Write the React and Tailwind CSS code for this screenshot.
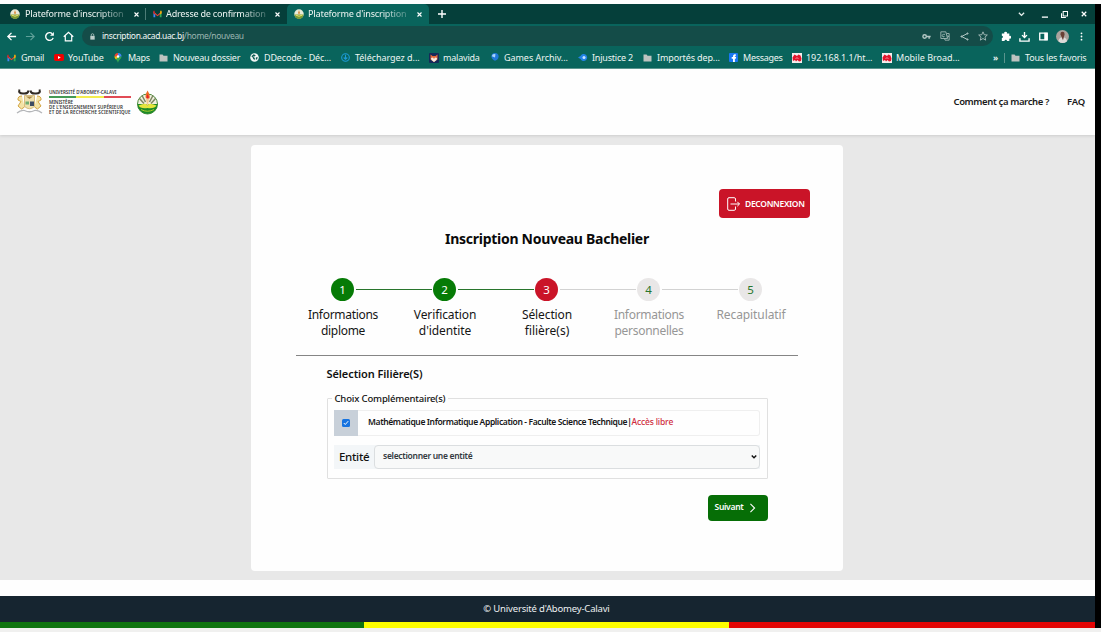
import { Fragment } from 'react';

const base = 'whitespace-nowrap';

function Seal() {
  return (
    <svg viewBox="0 0 20 20" className="size-[10px] shrink-0">
      <circle cx="10" cy="10" r="9.5" fill="#e8ead8" />
      <path d="M1 11h18a9 9 0 0 1-18 0z" fill="#7a9a35" />
      <path d="M10 2l2 6-2 3-2-3z" fill="#d98b3a" />
      <path d="M3 12q7 5 14 0" stroke="#e9e36a" strokeWidth="2" fill="none" />
    </svg>
  );
}

function GmailMark() {
  return (
    <svg viewBox="0 0 20 16" className="w-[9px] h-[8px] shrink-0">
      <path d="M1 2v13h4V7z" fill="#4285f4" />
      <path d="M19 2v13h-4V7z" fill="#34a853" />
      <path d="M1 2l9 8 9-8v4l-9 7-9-7z" fill="#ea4335" />
      <path d="M1 1h3v8L1 7z" fill="#c5221f" />
      <path d="M19 1h-3v8l3-2z" fill="#fbbc04" />
    </svg>
  );
}

function Folder() {
  return (
    <svg viewBox="0 0 20 18" className="w-[9px] h-[8px] shrink-0">
      <path d="M1 1h7l2 3h9v13H1z" fill="#bdc3c0" />
    </svg>
  );
}

function YouTubeMark() {
  return (
    <svg viewBox="0 0 20 14" className="w-[10px] h-[7px] shrink-0">
      <rect width="20" height="14" rx="3.5" fill="#f00000" />
      <path d="M8 4l5.500 3L8 10z" fill="#fff" />
    </svg>
  );
}

function MapsPin() {
  return (
    <svg viewBox="0 0 14 20" className="w-[8px] h-[10px] shrink-0">
      <path d="M7 20C6 14 0 12 0 7h14c0 5-6 7-7 13z" fill="#34a853" />
      <path d="M0 7a7 7 0 0 1 7-7v7z" fill="#ea4335" />
      <path d="M7 0a7 7 0 0 1 7 7H7z" fill="#4285f4" />
      <path d="M0 7h7l-4 6C1 11 0 9 0 7z" fill="#fbbc04" />
      <circle cx="7" cy="7" r="2.500" fill="#fff" />
    </svg>
  );
}

function Globe() {
  return (
    <svg viewBox="0 0 20 20" className="size-[9px] shrink-0">
      <circle cx="10" cy="10" r="9.500" fill="#f1f5f4" />
      <path d="M3 7l5-4 5 2-3 3-4 0 5 3-1 5-3-3-1-3zM13 10l4-1-1 5-3 1z" fill="#0b5b53" />
    </svg>
  );
}

function DownloadDisc() {
  return (
    <svg viewBox="0 0 20 20" className="size-[9px] shrink-0" fill="none" stroke="#1d9bd8" strokeWidth="2.400">
      <circle cx="10" cy="10" r="8.500" />
      <path d="M10 4v10M6 10l4 4 4-4" />
    </svg>
  );
}

function Fox() {
  return (
    <svg viewBox="0 0 20 20" className="size-[10px] shrink-0">
      <rect width="20" height="20" rx="2" fill="#15295a" />
      <path d="M3 3l4 3h6l4-3v10l-7 5-7-5z" fill="#e2683a" />
      <path d="M4 10l4-1 2 3 2-3 4 1-1 4-5 4-5-4z" fill="#f5ece4" />
    </svg>
  );
}

function BlueBall() {
  return (
    <svg viewBox="0 0 20 20" className="w-[10px] h-[9px] shrink-0">
      <path d="M2 8a8 8 0 0 1 16 0c0 6-5 9-8 9S2 13 2 8z" fill="#2179d8" />
      <path d="M3 7a6 6 0 0 1 8-4l-1 7z" fill="#a9d3fb" />
    </svg>
  );
}

function BlueEye() {
  return (
    <svg viewBox="0 0 20 18" className="w-[10px] h-[9px] shrink-0">
      <path d="M0 9l5-3a7 7 0 1 1 0 6z" fill="#2383e6" />
      <circle cx="12" cy="9" r="3" fill="#c7e5ff" />
    </svg>
  );
}

function FacebookMark() {
  return (
    <svg viewBox="0 0 20 20" className="size-[9px] shrink-0">
      <rect width="20" height="20" rx="2" fill="#1877f2" />
      <path d="M9 20v-7H6V9h3V7c0-3 2-4 6-4v4c-2 0-2 0-2 2h3l-1 4h-2v7z" fill="#fff" />
    </svg>
  );
}

function RedPetals() {
  return (
    <svg viewBox="0 0 20 20" className="size-[10px] shrink-0">
      <rect width="20" height="20" fill="#f5eeee" />
      <path d="M1 9l4-6 5 3 3-3 4 2 2 6-1 5-4 1-3-3-3 3-2-3-4 2z" fill="#e3142a" />
      <path d="M7 12l3-3 3 3" stroke="#fff" strokeWidth="1" fill="none" />
    </svg>
  );
}

const bookmarks = [
  { icon: <GmailMark />, text: 'Gmail', w: 'w-[47px]', t: 'tracking-[-0.33px]' },
  { icon: <YouTubeMark />, text: 'YouTube', w: 'w-[60px]', t: 'tracking-[-0.1px]' },
  { icon: <MapsPin />, text: 'Maps', w: 'w-[45px]', t: 'tracking-[-0.3px]' },
  { icon: <Folder />, text: 'Nouveau dossier', w: 'w-[91px]', t: 'tracking-[-0.27px]' },
  { icon: <Globe />, text: 'DDecode - Déc...', w: 'w-[91px]', t: 'tracking-[-0.15px]' },
  { icon: <DownloadDisc />, text: 'Téléchargez d...', w: 'w-[88px]', t: 'tracking-[-0.04px]' },
  { icon: <Fox />, text: 'malavida', w: 'w-[61px]', t: 'tracking-[-0.2px]' },
  { icon: <BlueBall />, text: 'Games Archiv...', w: 'w-[88px]', t: 'tracking-[-0.05px]' },
  { icon: <BlueEye />, text: 'Injustice 2', w: 'w-[65px]', t: 'tracking-[-0.2px]' },
  { icon: <Folder />, text: 'Importés dep...', w: 'w-[86px]', t: 'tracking-[-0.12px]' },
  { icon: <FacebookMark />, text: 'Messages', w: 'w-[63px]', t: 'tracking-[-0.28px]' },
  { icon: <RedPetals />, text: '192.168.1.1/ht...', w: 'w-[90px]', t: 'tracking-[-0.08px]' },
  { icon: <RedPetals />, text: 'Mobile Broad...', w: 'w-[111px]', t: 'tracking-[-0.01px]' },
];

function Cross() {
  return (
    <svg viewBox="0 0 10 10" className="size-[5px] shrink-0" stroke="#fff" strokeWidth="2.200">
      <path d="M1 1l8 8M9 1l-8 8" />
    </svg>
  );
}

const fade = 'bg-clip-text text-transparent bg-linear-to-r from-[#e9f1ef] from-75% to-[#e9f1ef40]';

function TabBar() {
  return (
    <div className="flex h-5 bg-[#053f3a] text-[9px] leading-[20px]">
      <div className="flex w-[146px] items-center pl-[10px]">
        <Seal />
        <span className={`${base} ${fade} ml-[5px] w-[99px] tracking-[-0.22px] font-medium`}>Plateforme d'inscription</span>
        <span className="ml-[10px] flex"><Cross /></span>
      </div>
      <div className="my-[4px] -ml-px w-px bg-[#4c7c77]" />
      <div className="flex w-[141px] items-center pl-[7px]">
        <GmailMark />
        <span className={`${base} ${fade} ml-[4px] w-[100px] tracking-[-0.25px] font-medium`}>Adresse de confirmation</span>
        <span className="ml-[9px] flex"><Cross /></span>
      </div>
      <div className="flex w-[142px] items-center rounded-t-[5px] bg-[#09645c] pl-[7px]">
        <Seal />
        <span className={`${base} ${fade} ml-[4px] w-[99px] tracking-[-0.22px] font-medium`}>Plateforme d'inscription</span>
        <span className="ml-[10px] flex"><Cross /></span>
      </div>
      <div className="flex items-center pl-[9px]">
        <svg viewBox="0 0 8 8" className="size-[8px]" stroke="#fff" strokeWidth="1.400"><path d="M4 0v8M0 4h8" /></svg>
      </div>
      <div className="ml-auto flex items-center gap-[13px] pr-[8px]">
        <svg viewBox="0 0 8 8" className="size-[7px] mr-[3px]" fill="none" stroke="#e8f0ee" strokeWidth="1.500"><path d="M1 2l3 3 3-3" /></svg>
        <svg viewBox="0 0 8 8" className="size-[7px]" stroke="#fff" strokeWidth="1.500"><path d="M1 7h7" /></svg>
        <svg viewBox="0 0 8 8" className="size-[7px]" fill="none" stroke="#fff" strokeWidth="1.200"><path d="M2.500.600h5v5h-5zM.600 2.500v5h5" /></svg>
        <svg viewBox="0 0 8 8" className="size-[6px]" stroke="#fff" strokeWidth="1.600"><path d="M1 1l6 6M7 1L1 7" /></svg>
      </div>
    </div>
  );
}

const ic = 'size-[11px] shrink-0';

function Toolbar() {
  return (
    <div className="flex h-[23px] items-center bg-[#09645c] pt-[1px] pl-[6px]">
      <div className="flex w-[76px] items-center gap-[8px]">
        <svg viewBox="0 0 12 12" className={ic} fill="none" stroke="#fff" strokeWidth="1.400"><path d="M11 6H2M6 2L2 6l4 4" /></svg>
        <svg viewBox="0 0 12 12" className={ic} fill="none" stroke="#5fa099" strokeWidth="1.300"><path d="M1 6h9M6 2l4 4-4 4" /></svg>
        <svg viewBox="0 0 12 12" className={ic} fill="none" stroke="#fff" strokeWidth="1.500"><path d="M10 7.500A4.200 4.200 0 1 1 9 3" /><path d="M10.800 1v4.200H6.600z" fill="#fff" stroke="none" /></svg>
        <svg viewBox="0 0 12 12" className={ic} fill="none" stroke="#fff" strokeWidth="1.300"><path d="M.800 6.300L6 1.500l5.200 4.800M2.500 5.200v5.600h7V5.200" /></svg>
      </div>
      <div className="flex h-[20px] w-[911px] items-center rounded-full bg-[#144c48] pr-[5px] pl-[8px]">
        <svg viewBox="0 0 8 10" className="w-[5px] h-[7px]"><rect x=".5" y="4" width="7" height="6" fill="#bdccc9" /><path d="M2 4V2.500a2 2 0 0 1 4 0V4" fill="none" stroke="#bdccc9" strokeWidth="1.200" /></svg>
        <span className={`${base} ml-[7px] text-[8.5px] tracking-[-0.33px] text-[#9ab5b1]`}>
          <span className="text-[#f2f7f6]">inscription.acad.uac.bj</span>/home/nouveau
        </span>
        <div className="ml-auto flex items-center gap-[9.500px]">
          <svg viewBox="0 0 12 12" className="size-[9px]" fill="none" stroke="#b4c8c5" strokeWidth="1.900"><circle cx="3.500" cy="6" r="2.300" /><path d="M6 6h5.500M9.500 6v3" /></svg>
          <svg viewBox="0 0 12 12" className="size-[10px]" fill="none" stroke="#a9bfbc" strokeWidth="1"><path d="M1 1h6l2 8H1zM8 3h3v8H6l-.5-2" /><path d="M6 4H4.200a1.500 1.500 0 1 0 1 2.500H4M8.500 6h2M9 8l1.500-2" /></svg>
          <svg viewBox="0 0 12 12" className="size-[9px]" fill="none" stroke="#b4c8c5" strokeWidth="1.300"><path d="M10 2L2 6l8 4" /><circle cx="10" cy="2" r=".8" /><circle cx="2" cy="6" r=".8" /><circle cx="10" cy="10" r=".8" /></svg>
          <svg viewBox="0 0 12 12" className="size-[10px]" fill="none" stroke="#b4c8c5" strokeWidth="1"><path d="M6 1l1.500 3.500 3.700.3-2.800 2.500.8 3.700L6 9l-3.200 2 .8-3.700L.800 4.800l3.700-.3z" /></svg>
        </div>
      </div>
      <div className="flex items-center pl-[8px]">
        <svg viewBox="0 0 12 12" className="size-[10px]"><path d="M1 3h3a1.600 1.600 0 1 1 3 0h3v3a1.600 1.600 0 1 1 0 3v3H7.200a1.500 1.500 0 0 0-3 0H1V8.500a1.300 1.300 0 0 0 0-2.700z" fill="#fff" /></svg>
        <svg viewBox="0 0 12 12" className="ml-[8px] size-[11px]" fill="none" stroke="#fff" strokeWidth="1.500"><path d="M6 1v6M3.300 4.500L6 7.200l2.700-2.700M1 8v3h10V8" /></svg>
        <svg viewBox="0 0 12 12" className="ml-[9px] size-[9px]"><path d="M1 1.500h10v9H1z" fill="none" stroke="#fff" strokeWidth="1.800" /><path d="M7 1h4v10H7z" fill="#fff" /></svg>
        <svg viewBox="0 0 14 14" className="ml-[8px] size-[13px]"><circle cx="7" cy="7" r="7" fill="#aaa39d" /><path d="M2.500 12Q3.500 8 7 7.500q4 .5 5 4.500-5 4-9.500 0z" fill="#dedbd9" /><path d="M4.700 4.500a2.300 2.500 0 0 1 4.600 0L8.500 7.500 7.500 11 6 7.500z" fill="#6a4035" /></svg>
        <svg viewBox="0 0 4 12" className="ml-[11px] h-[9px] w-[3px]" fill="#fff"><circle cx="2" cy="1.800" r="1.200" /><circle cx="2" cy="6" r="1.200" /><circle cx="2" cy="10.200" r="1.200" /></svg>
      </div>
    </div>
  );
}

function BookmarkBar() {
  return (
    <div className="flex h-[22px] items-center border-b border-[#5d9992] bg-[#09645c] pl-[7px] text-[9px] text-[#edf5f3]">
      {bookmarks.map((b) => (
        <div key={b.text} className={`${b.w} flex shrink-0 items-center`}>
          <span className="flex w-[14px] shrink-0 items-center">{b.icon}</span>
          <span className={`${base} ${b.t}`}>{b.text}</span>
        </div>
      ))}
      <span className="w-[11px] shrink-0 leading-none font-semibold">»</span>
      <span className="mr-[6px] h-[10px] w-px shrink-0 bg-[#5a948d]" />
      <span className="flex w-[14px] shrink-0 items-center"><Folder /></span>
      <span className={`${base} tracking-[-0.2px]`}>Tous les favoris</span>
    </div>
  );
}

function Crest() {
  return (
    <svg viewBox="0 0 54 52" className="h-[26px] w-[27px] shrink-0">
      <path d="M7 1Q4 9 14 9q10 1 11-6M47 1q3 8-7 8-10 1-11-6" fill="none" stroke="#302a24" strokeWidth="4" />
      <path d="M12 14q-9 0-8 8l6 3-6 9 7 6 6-4M42 14q9 0 8 8l-6 3 6 9-7 6-6-4" fill="#f4e3a6" stroke="#d3a544" strokeWidth="2" />
      <path d="M17 13h20v22q-10 9-20 0z" fill="#eee0ae" stroke="#c59c48" strokeWidth="1.200" />
      <path d="M20 15h14l-7 5z" fill="#a98745" />
      <path d="M19 25h7v6h-7z" fill="#6fae72" />
      <path d="M28 25h8v9h-8z" fill="#3e4c63" />
      <path d="M2 48q8-7 15-5 10 5 20 0 7-2 15 5" fill="none" stroke="#b4b6b9" strokeWidth="2.500" />
    </svg>
  );
}

function UniversitySeal() {
  return (
    <svg viewBox="0 0 42 50" className="h-[25px] w-[21px] shrink-0">
      <circle cx="21" cy="28" r="20" fill="#f1f0df" stroke="#4a8a39" strokeWidth="2" />
      <path d="M1 28h40a20 20 0 0 1-40 0z" fill="#1d8a28" />
      <path d="M5 17l9 10M37 17l-9 10M10 11l7 13M32 11l-7 13" stroke="#7d8560" strokeWidth="3" />
      <path d="M3 31q18-7 18 1 0-8 18-1-4 7-18 5-14 2-18-5z" fill="#e4e53d" />
      <path d="M8 39q13 7 26 0" fill="none" stroke="#a9cf2b" strokeWidth="2" />
      <path d="M21 1q-6 11-3 16h7q2-6-4-16z" fill="#ef6a22" />
      <path d="M21 8q-3 7-1 10h3q1-5-2-10z" fill="#e3202b" />
      <path d="M18 17h6l-2 14h-2z" fill="#f4c98e" />
    </svg>
  );
}

function SiteHeader() {
  return (
    <header className="z-10 flex h-[66px] shrink-0 items-center bg-[#fefefe] pr-[10px] pl-[16px] shadow-[0_1px_3px_rgba(0,0,0,0.12)]">
      <Crest />
      <div className="ml-[6px] flex w-[82px] flex-col text-[4.5px] leading-[5px] font-semibold text-[#333]">
        <span className={base}>UNIVERSITÉ D'ABOMEY-CALAVI</span>
        <span className="mt-px mb-[2px] flex h-[2px]">
          <span className="flex-1 bg-[#459a55]" />
          <span className="flex-1 bg-[#f4ed4e]" />
          <span className="flex-1 bg-[#e14b55]" />
        </span>
        <span className={base}>MINISTÈRE</span>
        <span className={`${base} tracking-[0.12px]`}>DE L'ENSEIGNEMENT SUPÉRIEUR</span>
        <span className={`${base} tracking-[0.13px]`}>ET DE LA RECHERCHE SCIENTIFIQUE</span>
      </div>
      <div className="ml-[6px]"><UniversitySeal /></div>
      <nav className="ml-auto flex gap-[18px] text-[9.5px] font-semibold text-[#1a1a1a]">
        <a className={`${base} tracking-[-0.38px]`}>Comment ça marche ?</a>
        <a className={`${base} tracking-[-0.2px]`}>FAQ</a>
      </nav>
    </header>
  );
}

const steps = [
  { n: 1, lines: ['Informations', 'diplome'], circle: 'bg-[#067b06] text-white', text: 'text-[#151515]', line: 'bg-[#28752c]', t: ['tracking-[-0.3px]', 'tracking-[-0.3px]'] },
  { n: 2, lines: ['Verification', "d'identite"], circle: 'bg-[#067b06] text-white', text: 'text-[#151515]', line: 'bg-[#28752c]', t: ['tracking-[-0.1px]', 'tracking-[-0.1px]'] },
  { n: 3, lines: ['Sélection', 'filière(s)'], circle: 'bg-[#ca1428] text-white', text: 'text-[#151515]', line: 'bg-[#d2d2d2]', t: ['tracking-[-0.1px]', ''] },
  { n: 4, lines: ['Informations', 'personnelles'], circle: 'bg-[#e9e7e7] text-[#28752c]', text: 'text-[#969696]', line: 'bg-[#d2d2d2]', t: ['tracking-[-0.3px]', 'tracking-[-0.27px]'] },
  { n: 5, lines: ['Recapitulatif'], circle: 'bg-[#e9e7e7] text-[#28752c]', text: 'text-[#969696]', t: ['tracking-[-0.1px]'] },
];

function Stepper() {
  return (
    <div className="mx-[45px] flex border-b border-[#858585] pb-[15px]">
      <div className="-mr-[5px] flex w-[507px] shrink-0 items-start pl-[35px]">
        {steps.map((s) => (
          <Fragment key={s.n}>
            <div className="flex w-[24px] shrink-0 flex-col items-center">
              <span className={`${s.circle} mr-px flex size-[23px] items-center justify-center rounded-full text-[11.5px]`}>{s.n}</span>
              <div className={`${s.text} mt-[5.500px] flex flex-col items-center text-[12px] leading-[16.5px]`}>
                {s.lines.map((l, i) => (
                  <span key={l} className={`${base} ${s.t[i]}`}>{l}</span>
                ))}
              </div>
            </div>
            {s.line && <span className={`${s.line} mx-px mt-[11px] h-px w-[76px]`} />}
          </Fragment>
        ))}
      </div>
    </div>
  );
}

function ChoiceForm() {
  return (
    <div className="mt-[10px] ml-[75.500px] w-[441px]">
      <h2 className={`${base} text-[11px] leading-[16px] font-semibold tracking-[-0.08px] text-[#111]`}>Sélection Filière(S)</h2>
      <fieldset className="mt-[8px] h-[89px] rounded-[1px] border border-[#e0e0e0] px-[7px]">
        <legend className={`${base} -ml-[3px] h-[18px] px-[3px] text-[9.5px] leading-[18px] font-medium tracking-[-0.16px] text-[#111]`}>Choix Complémentaire(s)</legend>
        <div className="mt-[2px] -ml-[0.500px] flex h-[26px]">
          <span className="flex w-[24px] items-center justify-center bg-[#c8d0d9]">
            <span className="flex size-[8px] items-center justify-center rounded-[1.5px] bg-[#1673e0]">
              <svg viewBox="0 0 8 8" className="size-[6px]" fill="none" stroke="#fff" strokeWidth="1.300"><path d="M1 4l2 2 4-4.500" /></svg>
            </span>
          </span>
          <span className={`${base} flex flex-1 items-center rounded-r-[3px] border border-l-0 border-[#efefef] pl-[10px] text-[8.5px] font-semibold tracking-[-0.37px] text-[#161616]`}>
            Mathématique Informatique Application - Faculte Science Technique|
            <span className="font-medium tracking-[-0.15px] text-[#cf2a3c]">Accès libre</span>
          </span>
        </div>
        <div className="mt-[9px] -ml-[0.500px] flex h-[24px] items-center bg-[#f3f6f8]">
          <span className={`${base} w-[40px] pl-[5px] text-[11.5px] font-medium tracking-[-0.3px] text-[#111]`}>Entité</span>
          <span className="flex h-[24px] flex-1 items-center justify-between rounded-[4px] border border-[#dbdee0] bg-[#f8f9f9] pr-[2px] pl-[8px]">
            <span className={`${base} text-[8.5px] font-semibold tracking-[-0.3px] text-[#343a40]`}>selectionner une entité</span>
            <svg viewBox="0 0 8 8" className="size-[6px]" fill="none" stroke="#111" strokeWidth="1.900"><path d="M1 2l3 3 3-3" /></svg>
          </span>
        </div>
      </fieldset>
      <div className="mt-[16px] flex justify-end">
        <button className="flex h-[26px] w-[60px] items-center rounded-[4px] bg-[#066e06] pl-[7px] text-[8.5px] font-semibold tracking-[-0.3px] text-white">
          Suivant
          <svg viewBox="0 0 8 12" className="ml-[6px] h-[10px] w-[7px]" fill="none" stroke="#fff" strokeWidth="1.300"><path d="M1.500 1L6.500 6l-5 5" /></svg>
        </button>
      </div>
    </div>
  );
}

export default function App() {
  return (
    <div className="flex h-[632px] w-[1101px] flex-col overflow-hidden bg-[#f0f0ef] font-['Noto_Sans',sans-serif]">
      <div className="h-[4px] shrink-0 bg-[#fdfdfd]" />
      <div className="mb-[4px] flex min-h-0 flex-1 bg-black pr-[6px]">
        <div className="flex w-[1095px] flex-col">
          <TabBar />
          <Toolbar />
          <BookmarkBar />
          <SiteHeader />
          <main className="flex h-[445px] shrink-0 justify-center bg-[#e8e8e8] pt-[10px] pr-px">
            <section className="h-[426px] w-[592px] rounded-[4px] bg-[#fefefe] pt-[44px]">
              <div className="flex justify-end pr-[33px]">
                <button className="flex h-[29px] w-[91px] items-center rounded-[4px] bg-[#ca1428] pt-px pl-[8px] text-[8.5px] font-semibold tracking-[-0.32px] text-white">
                  <svg viewBox="0 0 13 14" className="mr-[5px] mb-px h-[14px] w-[13px]" fill="none" stroke="#fff" strokeWidth="1"><path d="M8.500 4.500V2A1.300 1.300 0 0 0 7.200.700H2A1.300 1.300 0 0 0 .700 2v10A1.300 1.300 0 0 0 2 13.300h5.200A1.300 1.300 0 0 0 8.500 12V9.500M3.500 7h9M10.300 4.800L12.500 7l-2.200 2.200" /></svg>
                  DECONNEXION
                </button>
              </div>
              <h1 className={`${base} mt-[11px] mb-[29px] text-center text-[14px] leading-[20px] font-bold tracking-[-0.28px] text-[#0a0a0a]`}>Inscription Nouveau Bachelier</h1>
              <Stepper />
              <ChoiceForm />
            </section>
          </main>
          <div className="h-[16px] shrink-0 bg-[#fefefe]" />
          <footer className="shrink-0">
            <div className="h-[26px] bg-[#162530] pr-[2px] text-center text-[9.5px] leading-[26px] tracking-[-0.18px] text-[#eef1f2]">© Université d'Abomey-Calavi</div>
            <div className="flex h-[6px]">
              <span className="w-[364px] bg-[#0f740f]" />
              <span className="w-[365px] bg-[#fdfd00]" />
              <span className="flex-1 bg-[#e30505]" />
            </div>
          </footer>
        </div>
      </div>
    </div>
  );
}
